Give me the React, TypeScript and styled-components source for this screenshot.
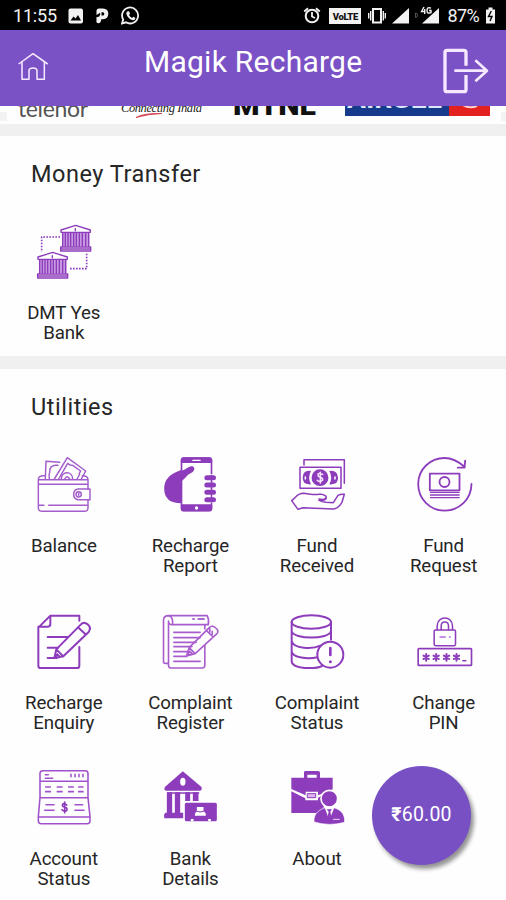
import React from 'react';
import styled, { createGlobalStyle } from 'styled-components';

const GlobalStyle = createGlobalStyle`
  * { box-sizing: border-box; }
  body { margin: 0; background: #fefefe; font-family: Roboto, "Noto Sans", sans-serif; }
`;

const HEADER = '#7b52c5';
const INK = '#8d3cbb';

const Screen = styled.div`
  position: relative;
  width: 506px;
  height: 900px;
  overflow: hidden;
  display: flex;
  flex-direction: column;
  background: #fefefe;
  color: #262626;
`;

const StatusBar = styled.div`
  height: 30px;
  flex: none;
  display: flex;
  align-items: center;
  justify-content: space-between;
  padding: 2px 10px 0 13px;
  background: #000;
  color: #f2f2f2;
`;

const StatusGroup = styled.div`
  display: flex;
  align-items: center;
`;

const StatusText = styled.span<{ $spacing: number; $gap?: number }>`
  margin-left: ${(p) => p.$gap ?? 0}px;
  font-size: 18px;
  line-height: 28px;
  letter-spacing: ${(p) => p.$spacing}px;
`;

const StatusGlyph = styled.svg<{ $w: number; $gap: number }>`
  display: block;
  width: ${(p) => p.$w}px;
  height: 28px;
  margin-left: ${(p) => p.$gap}px;
  fill: none;
  stroke: #f2f2f2;
`;

const LteBadge = styled.span`
  width: 32px;
  height: 16px;
  margin-left: 8px;
  display: flex;
  align-items: center;
  justify-content: center;
  background: #f2f2f2;
  color: #111;
  font-size: 9.5px;
  font-weight: 900;
  letter-spacing: -0.3px;
`;

const Header = styled.header`
  height: 76px;
  flex: none;
  display: grid;
  grid-template-columns: 127px 1fr 48px;
  padding: 0 17px;
  background: ${HEADER};
  color: #fff;
`;

const Title = styled.h1`
  margin: 13px 0 0 0;
  font-size: 30px;
  line-height: 38px;
  font-weight: 400;
  letter-spacing: 0.25px;
  white-space: nowrap;
`;

const HeaderIcon = styled.svg<{ $w: number; $h: number; $top: number }>`
  width: ${(p) => p.$w}px;
  height: ${(p) => p.$h}px;
  margin-top: ${(p) => p.$top}px;
  fill: none;
  stroke: #f6e9ff;
  stroke-linejoin: round;
`;

const Operators = styled.div`
  height: 18px;
  flex: none;
  width: 100%;
  overflow: hidden;
  background: #fefefe;
`;

const OperatorArt = styled.svg`
  display: block;
  width: 506px;
  height: 18px;
`;

const Divider = styled.div<{ $h: number }>`
  height: ${(p) => p.$h}px;
  flex: none;
  background: #f0f0f0;
`;

const Section = styled.section<{ $h: number }>`
  height: ${(p) => p.$h}px;
  flex: none;
`;

const SectionTitle = styled.h2`
  margin: 0;
  padding: 22px 0 0 31px;
  font-size: 23.5px;
  line-height: 32px;
  font-weight: 400;
  letter-spacing: 0.52px;
`;

const Grid = styled.div`
  display: grid;
  grid-template-columns: repeat(4, 126.6px);
  grid-auto-rows: 156.5px;
  padding-top: 32px;
`;

const Cell = styled.div`
  display: flex;
  flex-direction: column;
  align-items: center;
  padding-left: 1px;
`;

const CellIcon = styled.svg<{ $weight: number }>`
  width: 60px;
  height: 60px;
  flex: none;
  fill: none;
  stroke: ${INK};
  stroke-width: ${(p) => p.$weight};
  stroke-linejoin: round;
  stroke-linecap: round;
`;

const Label = styled.div`
  width: 110px;
  margin-top: 21px;
  text-align: center;
  font-size: 18.7px;
  line-height: 20px;
  letter-spacing: -0.1px;
`;

const BalanceFab = styled.button`
  position: absolute;
  left: 372px;
  top: 766px;
  width: 99px;
  height: 99px;
  padding: 0 0 3px;
  border: 0;
  border-radius: 50%;
  background: #7950c4;
  box-shadow: 3px 4px 4px rgba(0, 0, 0, 0.42);
  color: #fff;
  font-family: Roboto, "Noto Sans", sans-serif;
  font-size: 19.5px;
  letter-spacing: 0.2px;
`;

const Rupee = styled.span`
  font-weight: 700;
`;

type Item = { lines: string[]; box: string; weight: number; art: React.ReactNode };

const temple = (
  <>
    <path d="M183 240 L227 226 L271 240 V247 H183Z" />
    <path d="M186 249 H268 V288 H186Z" fill="#c99be3" stroke="none" />
    <path d="M188 249V289M196 249V289M204 249V289M212 249V289M221 249V289M229 249V289M238 249V289M247 249V289M257 249V289M266 249V289" />
    <path d="M182 291 H272 V303 H182Z M182 297H272M226 236V242" />
  </>
);

const dmt: Item = {
  lines: ['DMT Yes', 'Bank'], box: '102 216 180 180', weight: 4.2,
  art: (
    <>
      {temple}
      <g transform="translate(-69 81)">{temple}</g>
      <path d="M180 261H125V306M260 311V356H207" strokeDasharray="5 4" strokeWidth="5" strokeLinecap="butt" />
    </>
  ),
};

const utilities: Item[] = [
  {
    lines: ['Balance'], box: '102 45 180 180', weight: 4.4,
    art: (
      <g stroke="#a35dcc">
        <path d="M115 119Q115 107 130 107H136M247 107Q264 107 264 119V147M264 179V203Q264 214 253 214H127Q115 214 115 203V119H264M117 133H263" />
        <path d="M117 196H132M146 196H262" />
        <path d="M270 147H234Q221 149 221 163T234 179H270Z" />
        <circle cx="236" cy="163" r="8" />
        <path d="M236 160V166" />
        <path d="M136 117L138 64L179 67M148 117Q146 105 149 97Q148 78 166 76L174 76" />
        <path d="M163 117L202 53L257 93L244 117M176 117L203 70Q212 77 218 76L242 93Q237 99 238 105L231 117M184 117C184 93 217 91 218 117M194 117Q201 104 209 117" />
      </g>
    ),
  },
  {
    lines: ['Recharge', 'Report'], box: '481.5 45 180 180', weight: 4,
    art: (
      <>
        <path d="M544 93C517 102 496 116 496 145C496 176 517 188 545 188V93Z" fill={INK} />
        <rect x="546" y="54" width="90" height="158" rx="7" strokeWidth="5" />
        <path d="M546 67V61Q546 54 554 54H628Q636 54 636 61V67ZM546 195H636V206Q636 212 628 212H554Q546 212 546 206Z" fill={INK} />
        <path d="M546 94C561 91 569 78 579 81C587 86 580 95 571 99C560 104 556 115 546 121Z" fill={INK} />
        <path d="M580 61H602" stroke="#fff" />
        <circle cx="591" cy="204" r="5" fill="#fff" stroke="none" />
        <path d="M623 113H641M623 135H641M623 157H641M623 179H641" stroke="#fff" strokeWidth="20" />
        <path d="M622 113H642M622 135H642M622 157H642M622 179H642" strokeWidth="15" />
        <path d="M636 106V186" />
      </>
    ),
  },
  {
    lines: ['Fund', 'Received'], box: '102 45 180 180', weight: 4.6,
    art: (
      <>
        <path d="M153 75V59H274V130M141 82H264V145H141Z" />
        <circle cx="201" cy="113" r="23" fill={INK} />
        <path d="M174 93Q150 89 149 112T174 133Q163 113 174 93ZM229 93Q253 89 255 112T229 133Q240 113 229 93Z" fill={INK} stroke="none" />
        <path d="M157 111V117M246 111V117" stroke="#fff" />
        <path d="M209 103Q194 97 195 106C195 115 210 109 209 120Q202 128 193 121M202 97V129" stroke="#f7e5ff" />
        <path d="M116 182C127 174 132 160 151 160C167 161 182 166 198 163C214 161 225 170 217 178Q209 183 198 181Q207 185 219 187L241 188L255 166Q263 162 274 163L267 187Q256 205 241 207L150 203L135 208Z" />
        <path d="M198 177Q213 181 219 174" />
      </>
    ),
  },
  {
    lines: ['Fund', 'Request'], box: '481.5 45 180 180', weight: 5.4,
    art: (
      <>
        <path d="M654 132C653 179 617 212 573 212S494 176 494 132S530 54 573 54C600 54 618 67 634 81M635 62L633 83H613" />
        <path d="M529 101H618V151H529Z" />
        <circle cx="573" cy="126" r="15" />
        <path d="M531 157H617M531 165H617M531 173H617" strokeWidth="4" />
      </>
    ),
  },
  {
    lines: ['Recharge', 'Enquiry'], box: '102 33 180 180', weight: 6,
    art: (
      <>
        <path d="M238 59V44H151L115 80V194Q115 201 122 201H231Q238 201 238 194V138M151 44V70Q151 77 144 77H115" />
        <path d="M143 108H204M143 140H174M143 171H170" />
        <path d="M163 171L169 145L242 71Q251 61 263 70T266 93L190 166ZM169 145L190 166M234 79L258 101M163 171L172 160L180 168Z" />
      </>
    ),
  },
  {
    lines: ['Complaint', 'Register'], box: '481.5 33 180 180', weight: 4.8,
    art: (
      <g stroke="#a85cce">
        <path d="M507 44H623Q630 58 626 71H519Q522 47 507 44Q493 44 492 57V183Q492 187 498 187H507M507 60Q507 72 519 71M507 60V193Q507 201 514 201H608Q616 201 616 193V134M616 72V84" />
        <path d="M523 94H602M523 110H602M523 124H590M523 137H577M523 152H568M523 166H562M523 181H602" />
        <path d="M580 54H584M596 54H614" stroke={INK} />
        <path d="M561 165L569 140L627 82Q637 70 649 81T650 100L587 158ZM569 140L587 158M620 88L641 108M561 165L571 151L578 158ZM631 83V93M638 91V100" />
      </g>
    ),
  },
  {
    lines: ['Complaint', 'Status'], box: '102 33 180 180', weight: 6,
    art: (
      <>
        <ellipse cx="175" cy="63" rx="59" ry="20" />
        <path d="M116 63V181C117 206 189 204 207 195M234 63V116M116 91C122 116 228 116 234 91M116 120C121 144 179 145 202 134M116 151C119 171 165 175 193 169" />
        <circle cx="232" cy="161" r="39" fill="#fefefe" />
        <path d="M232 141V162" strokeWidth="8" />
        <circle cx="232" cy="182" r="4.5" fill={INK} stroke="none" />
      </>
    ),
  },
  {
    lines: ['Change', 'PIN'], box: '481.5 33 180 180', weight: 4.6,
    art: (
      <>
        <rect x="494" y="143" width="160" height="50" rx="2" strokeWidth="5" />
        <rect x="542" y="87" width="64" height="47" rx="4" />
        <path d="M551 86V75C551 43 597 43 597 75V86M563 86V75C563 59 585 59 585 75V86" />
        <path d="M560 108H575M588 108H590" stroke="#b76bdd" strokeWidth="5" />
        {[518, 548, 579, 609].map((x) => (
          <path key={x} d={`M${x} 159V179M${x - 8} 164L${x + 8} 174M${x - 8} 174L${x + 8} 164`} strokeWidth="6" />
        ))}
        <path d="M628 179H637" />
      </>
    ),
  },
  {
    lines: ['Account', 'Status'], box: '102 39 180 180', weight: 4.6,
    art: (
      <g stroke="#9f50ca">
        <path d="M120 128V55Q120 47 129 47H255Q264 47 264 55V128L270 185V197Q270 206 261 206H124Q115 206 115 197V185L120 128M121 79H263M120 128H264M115 186H270" />
        <path d="M136 59H145M136 70H158M213 58V65M225 58V65M237 58V65M249 58V65" />
        <path d="M137 96H151M172 96H186M206 96H220M236 96H249M137 110H151M172 110H186M206 110H220M236 110H249" strokeWidth="5" />
        <path d="M138 149H162M134 166H162M225 149H248M225 166H252" />
        <path d="M200 150C195 144 187 145 187 151C187 159 201 154 201 163C201 170 191 170 186 164M194 141V173" stroke={INK} strokeWidth="5" />
      </g>
    ),
  },
  {
    lines: ['Bank', 'Details'], box: '481.5 39 180 180', weight: 4,
    art: (
      <g fill={INK} stroke="none">
        <path d="M550 49L606 96Q609 107 600 107H500Q492 105 496 96Z" />
        <path d="M502 112H518V173H502ZM526 112H542V173H526ZM557 112H572V138H557ZM580 112H597V138H580ZM498 173H551V190H494V178Z" />
        <path d="M503 112H599V116H503Z" />
        <ellipse cx="550" cy="80" rx="8" ry="12" fill="#fff" />
        <rect x="556" y="143" width="96" height="56" rx="5" />
        <path d="M592 156H612V168H592ZM594 169H611Q620 172 619 182H586Q586 172 594 169ZM574 192H582V199H574ZM626 192H634V199H626Z" fill="#fff" />
        <path d="M594 169Q602 174 611 169" fill="none" stroke={INK} strokeWidth="3" />
      </g>
    ),
  },
  {
    lines: ['About'], box: '102 39 180 180', weight: 4,
    art: (
      <g fill={INK} stroke="none">
        <path d="M153 70V52Q153 48 158 48H195Q201 48 201 53V70H191V59H163V70Z" />
        <path d="M115 68H239V103L195 121V110H158V121L115 102Z" />
        <path d="M115 109L157 130V136H195V128L212 120V174H115Z" />
        <path d="M164 116H188V128H164Z" fill="#dfb6f3" stroke={INK} strokeWidth="3" />
        <ellipse cx="229" cy="131" rx="25" ry="25" stroke="#fff" strokeWidth="5" />
        <path d="M183 201C180 172 204 163 216 158L229 192L243 158C260 164 276 172 275 202Q229 215 183 201Z" stroke="#fff" strokeWidth="2" />
        <path d="M221 163H237L232 170L236 190L229 201L223 190L227 170Z" />
        <path d="M241 193H259" stroke="#efd6fa" strokeWidth="3" />
      </g>
    ),
  },
];

const GridItem = ({ item }: { item: Item }) => (
  <Cell>
    <CellIcon viewBox={item.box} $weight={item.weight}>{item.art}</CellIcon>
    <Label>{item.lines.map((line) => <div key={line}>{line}</div>)}</Label>
  </Cell>
);

export default function App() {
  return (
    <>
      <GlobalStyle />
      <Screen>
        <StatusBar>
          <StatusGroup>
            <StatusText $spacing={-0.2}>11:55</StatusText>
            <StatusGlyph $w={16} $gap={11} viewBox="0 0 16 28">
              <rect x="0.5" y="6.5" width="14.5" height="15" rx="2" fill="#f2f2f2" stroke="none" />
              <path d="M2.5 18.5L5.5 14.5L7.5 16.5L10 13L13 18.5Z" fill="#000" stroke="none" />
            </StatusGlyph>
            <StatusGlyph $w={13} $gap={12} viewBox="0 0 13 28">
              <path d="M0.5 13V8.5Q0.7 6.5 3 6.5H7Q12.3 6.7 12.3 11.8T7 17.2H5.2Q5 21.2 2.4 21.2T0.5 18.5V15Q3.8 15.5 4.2 12.5V10.8Z" fill="#f2f2f2" stroke="none" />
              <path d="M5.5 10.2H6.8Q8.4 10.4 8.3 11.9T6.8 13.4H5.5Z" fill="#000" stroke="none" />
            </StatusGlyph>
            <StatusGlyph $w={19} $gap={12} viewBox="0 0 19 28">
              <path d="M1 21.5L2.2 17.5A8 8 0 1 1 5 20.3Z" strokeWidth="1.8" />
              <path d="M6.2 9.5L8 9.2L9 11.8L8 13Q9.2 15.2 11 16L12.4 14.8L14.5 16Q14 18.3 12 18.2C8 17.5 5.4 13.5 5.3 11Z" fill="#f2f2f2" stroke="none" />
            </StatusGlyph>
          </StatusGroup>
          <StatusGroup>
            <StatusGlyph $w={18} $gap={0} viewBox="0 0 18 28">
              <circle cx="9" cy="14" r="6.3" strokeWidth="2" />
              <path d="M9 10V14.5L12 16M1.2 9.5L5 6.2M16.8 9.5L13 6.2" strokeWidth="1.8" />
            </StatusGlyph>
            <LteBadge>VoLTE</LteBadge>
            <StatusGlyph $w={18} $gap={7} viewBox="0 0 18 28">
              <rect x="5" y="7" width="8" height="13.5" strokeWidth="2" />
              <path d="M2.7 9V18.5M0.7 11V16.5M15.3 9V18.5M17.3 11V16.5" strokeWidth="1.4" />
            </StatusGlyph>
            <StatusGlyph $w={17} $gap={6} viewBox="0 0 17 28">
              <path d="M17 6V21.5H0Z" fill="#f2f2f2" stroke="none" />
            </StatusGlyph>
            <StatusGlyph $w={25} $gap={5} viewBox="0 0 25 28">
              <path d="M1.5 11V15.5Q4 15 3.5 13Q3.5 11 1.5 11" strokeWidth="1" stroke="#555" />
              <path d="M25 6V21.5H8Z" fill="#f2f2f2" stroke="none" />
              <path d="M10 5L7.5 9.5H11.5M10.7 7V12M17 6.2Q13 4.5 13 8.5T17 10.5V8.5H15" strokeWidth="1.4" />
            </StatusGlyph>
            <StatusText $spacing={-0.6} $gap={8}>87%</StatusText>
            <StatusGlyph $w={11} $gap={6} viewBox="0 0 11 28">
              <path d="M1 7.5H3.5V5.5H7.5V7.5H10V21.5H1Z" fill="#f2f2f2" stroke="none" />
              <path d="M6.3 9L3.5 14.5H7L5 19" stroke="#000" strokeWidth="1.4" />
            </StatusGlyph>
          </StatusGroup>
        </StatusBar>

        <Header>
          <HeaderIcon $w={32} $h={30} $top={22} viewBox="51 156 96 90" strokeWidth="4.6">
            <path d="M56 192L99 161L143 192M66 187V238H87V213Q87 204 99 204T111 213V238H133V187" />
          </HeaderIcon>
          <Title>Magik Recharge</Title>
          <HeaderIcon $w={48} $h={48} $top={17} viewBox="564 141 144 144" strokeWidth="10">
            <path d="M639 197V157Q639 151 633 151H582Q576 151 576 157V269Q576 275 582 275H633Q639 275 639 269V225" />
            <path d="M604 212H701M667 181L702 212L667 244" strokeWidth="8" />
          </HeaderIcon>
        </Header>

        <Operators>
          <OperatorArt viewBox="0 106 506 18">
            <rect x="0" y="112" width="7" height="9" fill="#f3f3f3" />
            <rect x="501" y="112" width="5" height="9" fill="#f3f3f3" />
            <text x="18" y="116.5" fontFamily="Lato" fontSize="23" fill="#555" textLength="70">telenor</text>
            <text x="121" y="111.5" fontFamily="Liberation Serif" fontStyle="italic" fontSize="12.5" fill="#222" textLength="81">Connecting India</text>
            <path d="M136 117.5Q143 113 162 113.5Q148 114 136 117.5Z" fill="#d33b4c" stroke="#d33b4c" strokeWidth=".8" />
            <text x="233" y="115" fontFamily="Roboto" fontWeight="900" fontSize="27" fill="#111" textLength="83" lengthAdjust="spacingAndGlyphs">MTNL</text>
            <rect x="345" y="100" width="104" height="16" fill="#173b8c" />
            <rect x="449" y="100" width="41" height="16" fill="#e3211f" />
            <text x="347" y="108.3" fontFamily="Roboto" fontWeight="700" fontSize="24" fill="#dce6f8" textLength="95" lengthAdjust="spacingAndGlyphs">AIRCEL</text>
            <path d="M462 104.5Q469 109 477 106" fill="none" stroke="#fbd5d5" strokeWidth="2" />
          </OperatorArt>
        </Operators>
        <Divider $h={12} />
        <Section $h={220}>
          <SectionTitle>Money Transfer</SectionTitle>
          <Grid><GridItem item={dmt} /></Grid>
        </Section>
        <Divider $h={13} />
        <Section $h={531}>
          <SectionTitle>Utilities</SectionTitle>
          <Grid>{utilities.map((u) => <GridItem key={u.lines.join(' ')} item={u} />)}</Grid>
        </Section>
        <BalanceFab><Rupee>₹</Rupee>60.00</BalanceFab>
      </Screen>
    </>
  );
}
